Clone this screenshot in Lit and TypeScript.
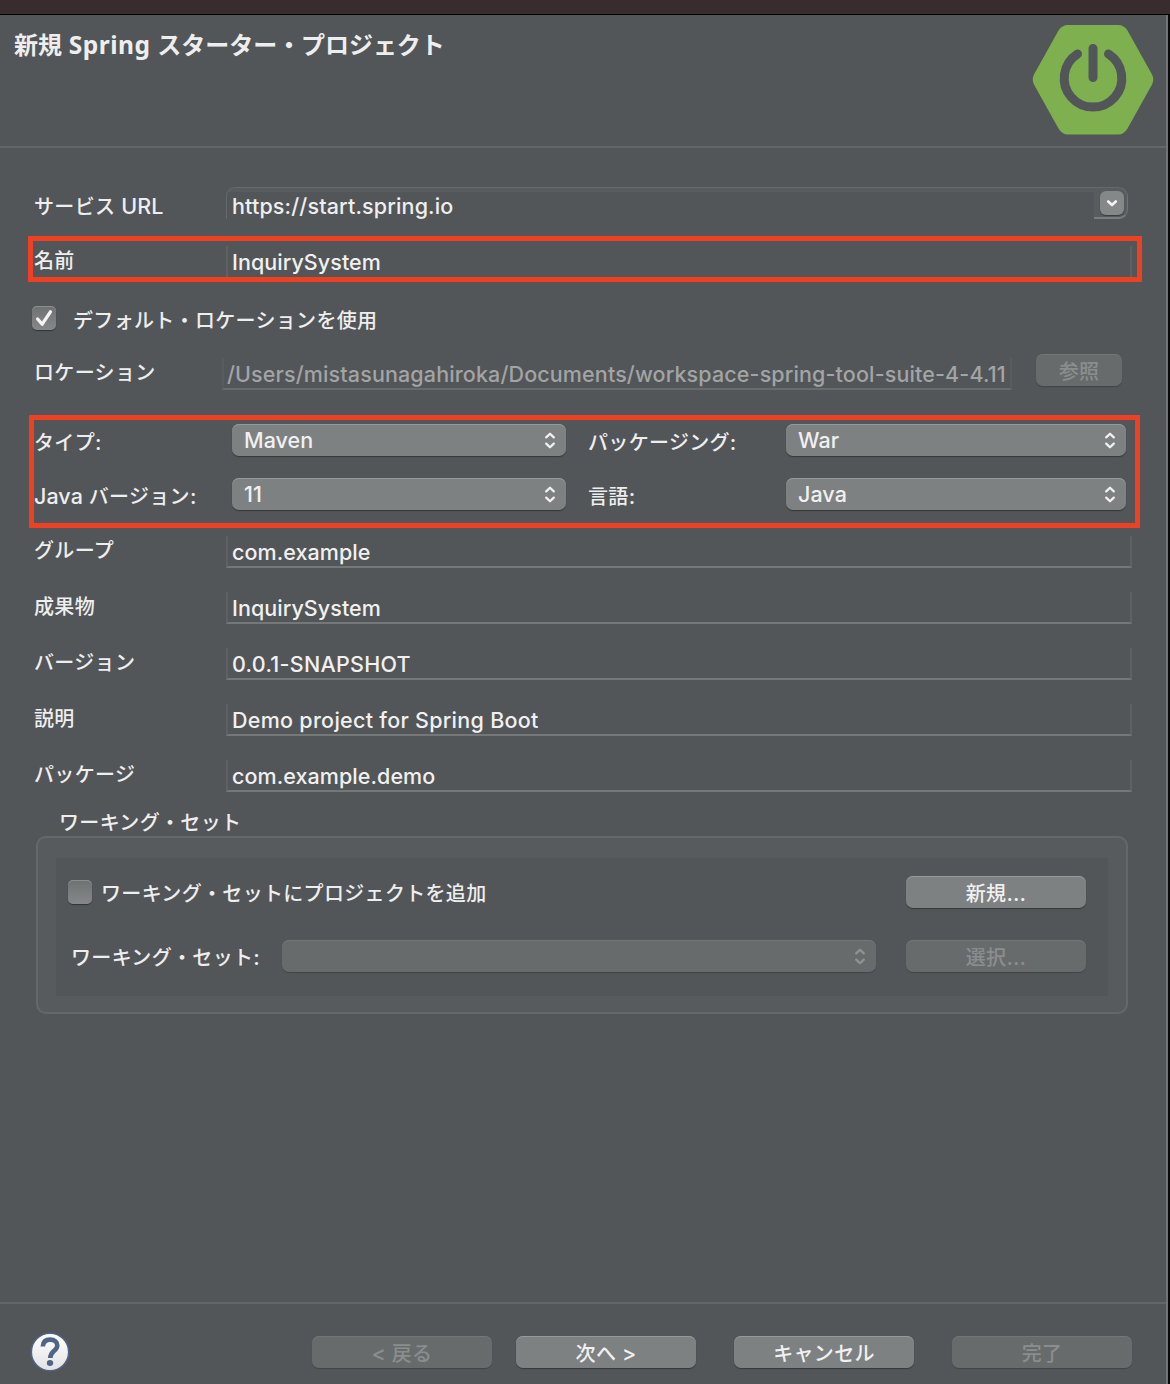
import { LitElement, html, css, svg } from "lit";
import { customElement, property } from "lit/decorators.js";
import { classMap } from "lit/directives/class-map.js";

/* Splits a caption into Latin and Japanese runs so that each gets its own face. */
const runs = (text: string) =>
  text
    .split(/([\u3000-\u30ff\u4e00-\u9fff]+)/)
    .filter((part) => part.length > 0)
    .map((part) =>
      /[\u3000-\u30ff\u4e00-\u9fff]/.test(part)
        ? html`<span class="ja">${part}</span>`
        : html`<span class="en">${part}</span>`
    );

const textStyles = css`
  :host {
    display: block;
    box-sizing: border-box;
  }
  .ja {
    font-family: "Noto Sans CJK JP", sans-serif;
    font-size: 20px;
    font-weight: 500;
    letter-spacing: 0.32px;
  }
  .en {
    font-family: Inter, "Liberation Sans", sans-serif;
    font-size: 21.5px;
    font-weight: 500;
    letter-spacing: var(--track, 0.06px);
    white-space: pre;
  }
`;

const arrows = svg`
  <path d="M2.200 5.400 L6 1.700 L9.800 5.400 M2.200 11.600 L6 15.300 L9.800 11.600"
    fill="none" stroke="currentColor" stroke-width="2.300"
    stroke-linecap="round" stroke-linejoin="round"></path>`;

@customElement("push-button")
export class PushButton extends LitElement {
  @property() label = "";
  @property({ type: Boolean }) disabled = false;

  static styles = [
    textStyles,
    css`
      .face {
        box-sizing: border-box;
        height: 32px;
        display: flex;
        justify-content: center;
        border-radius: 7px;
        color: #f0f0f0;
        background: #7e8182;
        box-shadow: inset 0 1px 0 #979a9b, 0 1px 1px rgba(0, 0, 0, 0.35);
        line-height: 33px;
        white-space: pre;
      }
      .disabled {
        color: #8b8e8f;
        background: #676b6c;
        box-shadow: inset 0 1px 0 #727677, 0 1px 1px rgba(0, 0, 0, 0.2);
      }
    `,
  ];

  render() {
    return html`<div class=${classMap({ face: true, disabled: this.disabled })}>
      <span>${runs(this.label)}</span>
    </div>`;
  }
}

@customElement("popup-button")
export class PopupButton extends LitElement {
  @property() value = "";
  @property({ type: Boolean }) disabled = false;

  static styles = [
    textStyles,
    css`
      .face {
        box-sizing: border-box;
        height: 32px;
        display: flex;
        justify-content: space-between;
        padding: 0 10px 0 12px;
        border-radius: 7px;
        color: #f0f0f0;
        background: #7e8182;
        box-shadow: inset 0 1px 0 #979a9b, 0 1px 1px rgba(0, 0, 0, 0.35);
        line-height: 33px;
      }
      .disabled {
        color: #8f9293;
        background: #676b6c;
        box-shadow: inset 0 1px 0 #727677, 0 1px 1px rgba(0, 0, 0, 0.2);
      }
      svg {
        display: block;
        width: 12px;
        height: 17px;
        margin-top: 8px;
      }
    `,
  ];

  render() {
    return html`<div class=${classMap({ face: true, disabled: this.disabled })}>
      <span>${runs(this.value)}</span>
      <svg viewBox="0 0 12 17">${arrows}</svg>
    </div>`;
  }
}

@customElement("text-field")
export class TextField extends LitElement {
  @property() value = "";
  @property({ type: Boolean }) disabled = false;

  static styles = [
    textStyles,
    css`
      .field {
        box-sizing: border-box;
        height: var(--field-height, 32px);
        padding-left: 4px;
        border: 2px solid #5e6263;
        border-width: 0 2px 2px;
        border-bottom-color: #747879;
        color: #f0f0f0;
        line-height: 32px;
        white-space: nowrap;
      }
      .disabled {
        padding-left: 3px;
        color: #a2a4a5;
        border-color: #585c5e;
        border-bottom-color: #686c6d;
      }
    `,
  ];

  render() {
    return html`<div class=${classMap({ field: true, disabled: this.disabled })}>${runs(this.value)}</div>`;
  }
}

@customElement("check-box")
export class CheckBox extends LitElement {
  @property({ type: Boolean }) checked = false;

  static styles = css`
    :host {
      display: block;
    }
    .box {
      width: 24px;
      height: 24px;
      border-radius: 5px;
      background: linear-gradient(#6f7273, #858788);
      box-shadow: inset 0 1px 0 #8b8e8f, 0 1px 1px rgba(0, 0, 0, 0.4);
    }
    svg {
      display: block;
      width: 24px;
      height: 24px;
    }
  `;

  render() {
    return html`<div class="box">
      ${this.checked
        ? html`<svg viewBox="0 0 24 24">
            <path d="M5.600 13 L10.200 18.200 L18.400 5.800" fill="none" stroke="#f4f4f4" stroke-width="3.300"
              stroke-linecap="round" stroke-linejoin="round"></path>
          </svg>`
        : null}
    </div>`;
  }
}

const fields = [
  { label: "グループ", value: "com.example", loose: false },
  { label: "成果物", value: "InquirySystem", loose: false },
  { label: "バージョン", value: "0.0.1-SNAPSHOT", loose: true },
  { label: "説明", value: "Demo project for Spring Boot", loose: true },
  { label: "パッケージ", value: "com.example.demo", loose: false },
];

const options = [
  [
    { label: "タイプ:", value: "Maven" },
    { label: "パッケージング:", value: "War" },
  ],
  [
    { label: "Java バージョン:", value: "11" },
    { label: "言語:", value: "Java" },
  ],
];

@customElement("app-root")
export class AppRoot extends LitElement {
  static styles = [
    textStyles,
    css`
      .screen {
        box-sizing: border-box;
        width: 1170px;
        height: 1384px;
        display: flex;
        flex-direction: column;
        overflow: hidden;
        background: #0a0a0b;
        color: #eeeeee;
      }
      .backdrop {
        height: 14px;
        background: #382c2e;
        border-bottom: 1px solid #000;
      }
      .dialog {
        box-sizing: border-box;
        width: 1168px;
        flex: 1;
        display: flex;
        flex-direction: column;
        background: #525658;
        border-right: 2px solid #707475;
      }
      header {
        box-sizing: border-box;
        height: 133px;
        display: flex;
        justify-content: space-between;
        padding: 9px 12px 0 14px;
        border-bottom: 2px solid #626667;
      }
      h1 {
        margin: 3px 0 0;
        font-size: 24px;
        line-height: 34px;
        font-weight: 700;
      }
      h1 .ja {
        font-size: 24px;
        font-weight: 700;
        letter-spacing: -0.05px;
      }
      h1 .en {
        font-family: "Noto Sans", sans-serif;
        font-size: 24.5px;
        font-weight: 700;
        letter-spacing: 0.5px;
      }
      .logo {
        width: 122px;
        height: 112px;
      }
      main {
        flex: 1;
        padding-top: 39px;
      }
      .row {
        position: relative;
        box-sizing: border-box;
        display: flex;
        align-items: flex-start;
        padding-left: 34px;
        height: 56px;
      }
      .url {
        --track: 0.15px;
        height: 59px;
      }
      .title {
        --field-height: 34px;
        height: 58px;
      }
      .default {
        height: 50px;
        padding: 2px 0 0 32px;
        gap: 17px;
      }
      .location {
        height: 70px;
      }
      .options {
        position: relative;
        height: 112px;
      }
      .options .row {
        height: 54px;
      }
      .label {
        width: 192px;
        line-height: 32px;
        margin-top: -2px;
        white-space: nowrap;
      }
      .url .label {
        margin-top: 3px;
      }
      .options .label,
      .location .label {
        margin-top: 2px;
      }
      .wide {
        width: 906px;
      }
      .loose {
        --track: 0.28px;
      }
      .path {
        --track: 0.13px;
        flex: none;
        width: 790px;
        margin: 4px 24px 0 -4px;
      }
      .browse {
        flex: none;
        width: 86px;
      }
      .options .label {
        width: 198px;
      }
      .options .second {
        margin-left: 22px;
      }
      .options .label + .menu {
        width: 334px;
      }
      .options .second + .menu {
        width: 340px;
      }
      .mark {
        position: absolute;
        box-sizing: border-box;
        border: 5px solid #ee4023;
      }
      .mark-name {
        left: 27.5px;
        top: -10.5px;
        width: 1114px;
        height: 46px;
      }
      .mark-options {
        left: 28.5px;
        top: -9.5px;
        width: 1111px;
        height: 113px;
      }
      .combo {
        box-sizing: border-box;
        width: 902px;
        height: 32px;
        display: flex;
        justify-content: space-between;
        border-top: 1px solid #66696a;
        border-left: 1px solid #66696a;
        border-radius: 9px 9px 9px 0;
        background: linear-gradient(#585c5e 4px, #525658 4px);
        padding-left: 5px;
        line-height: 37px;
      }
      .drop {
        box-sizing: border-box;
        width: 34px;
        height: 31px;
        padding: 3px 0 0 6px;
        border: 1px solid #6e7273;
        border-bottom: 2px solid #797d7e;
        border-width: 0 1px 2px 0;
        border-radius: 0 9px 9px 0;
        background: #585c5e;
      }
      .drop svg {
        display: block;
        width: 24px;
        height: 24px;
        border-radius: 6px;
        background: #858889;
        box-shadow: 0 1px 1px rgba(0, 0, 0, 0.35);
      }
      .caption {
        line-height: 28px;
      }
      .legend {
        height: 20px;
        padding-left: 59px;
        line-height: 12px;
      }
      .group {
        box-sizing: border-box;
        width: 1092px;
        height: 178px;
        margin-left: 36px;
        padding: 20px 18px 16px;
        border: 2px solid #64686a;
        border-radius: 10px;
        background: #575b5d;
      }
      .inner {
        box-sizing: border-box;
        height: 138px;
        padding: 18px 22px 0 12px;
        background: #525658;
        display: flex;
        flex-direction: column;
        gap: 32px;
      }
      .line {
        height: 32px;
        display: flex;
        align-items: center;
      }
      .line .caption {
        padding: 4px 0 0 9px;
        flex: 1;
      }
      .line .name {
        width: 211px;
        padding: 4px 0 0 3px;
        line-height: 32px;
      }
      .line .menu {
        width: 594px;
        margin-right: 30px;
      }
      .line .push {
        width: 180px;
      }
      footer {
        box-sizing: border-box;
        height: 82px;
        display: flex;
        align-items: flex-start;
        padding: 28px 34px 0 30px;
        border-top: 2px solid #626667;
      }
      .help {
        width: 40px;
        height: 40px;
        margin-right: auto;
      }
      footer .push {
        width: 180px;
        margin-top: 4px;
      }
      footer .next {
        margin: 4px 38px 0 24px;
      }
      footer .finish {
        margin-left: 38px;
      }
    `,
  ];

  render() {
    return html`<div class="screen">
      <div class="backdrop"></div>
      <div class="dialog">
        <header>
          <h1>${runs("新規 Spring スターター・プロジェクト")}</h1>
          <svg class="logo" viewBox="0 0 122 112">
            <path d="M36 1 H86 Q92 1 95.500 6.500 L120 50.500 Q122.500 55.500 120 60.500 L95.500 104.500 Q92 110.500 86 110.500 H36 Q30 110.500 26.500 104.500 L2 60.500 Q-0.500 55.500 2 50.500 L26.500 6.500 Q30 1 36 1 Z" fill="#7fb04f"></path>
            <path d="M45.500 30 A28.800 28.800 0 1 0 76.500 30 M61 24.500 V53.500" fill="none" stroke="#525658" stroke-width="9" stroke-linecap="round"></path>
          </svg>
        </header>
        <main>
          <div class="row url">
            <div class="label">${runs("サービス URL")}</div>
            <div class="combo">
              <span>${runs("https://start.spring.io")}</span>
              <div class="drop">
                <svg viewBox="0 0 24 24">
                  <path d="M8.200 10.500 L12 14 L15.800 10.500" fill="none" stroke="#f4f4f4" stroke-width="2.600" stroke-linecap="round" stroke-linejoin="round"></path>
                </svg>
              </div>
            </div>
          </div>
          <div class="row title">
            <div class="label">${runs("名前")}</div>
            <text-field class="wide" value="InquirySystem"></text-field>
            <div class="mark mark-name"></div>
          </div>
          <div class="row default">
            <check-box checked></check-box>
            <span class="caption">${runs("デフォルト・ロケーションを使用")}</span>
          </div>
          <div class="row location">
            <div class="label">${runs("ロケーション")}</div>
            <text-field class="path" disabled
              value="/Users/mistasunagahiroka/Documents/workspace-spring-tool-suite-4-4.11"></text-field>
            <push-button class="browse" label="参照" disabled></push-button>
          </div>
          <div class="options">
            ${options.map(
              (pair) => html`<div class="row">
                ${pair.map(
                  (o, i) => html`<div class=${classMap({ label: true, second: i === 1 })}>${runs(o.label)}</div>
                    <popup-button class="menu" value=${o.value}></popup-button>`
                )}
              </div>`
            )}
            <div class="mark mark-options"></div>
          </div>
          ${fields.map(
            (f) => html`<div class="row">
              <div class="label">${runs(f.label)}</div>
              <text-field class=${classMap({ wide: true, loose: f.loose })} value=${f.value}></text-field>
            </div>`
          )}
          <div class="legend">${runs("ワーキング・セット")}</div>
          <div class="group">
            <div class="inner">
              <div class="line">
                <check-box></check-box>
                <span class="caption">${runs("ワーキング・セットにプロジェクトを追加")}</span>
                <push-button class="push" label="新規..."></push-button>
              </div>
              <div class="line">
                <span class="name">${runs("ワーキング・セット:")}</span>
                <popup-button class="menu" disabled></popup-button>
                <push-button class="push" label="選択..." disabled></push-button>
              </div>
            </div>
          </div>
        </main>
        <footer>
          <svg class="help" viewBox="0 0 40 40">
            <defs>
              <linearGradient id="shine" x1="0" y1="0" x2="0" y2="1">
                <stop offset="0" stop-color="#ffffff"></stop>
                <stop offset="1" stop-color="#e2e2e2"></stop>
              </linearGradient>
            </defs>
            <circle cx="20" cy="20" r="18.700" fill="url(#shine)" stroke="#516488" stroke-width="1.600"></circle>
            <path d="M12.800 14.500 C13 9.500 16 7.600 20.200 7.600 C24.500 7.600 27.300 10 27.300 13.400 C27.300 19 20.300 18.800 20.300 26" fill="none" stroke="#516488" stroke-width="4.600"></path>
            <ellipse cx="20" cy="31" rx="3.200" ry="2.900" fill="#516488"></ellipse>
          </svg>
          <push-button class="push" label="&lt; 戻る" disabled></push-button>
          <push-button class="push next" label="次へ &gt;"></push-button>
          <push-button class="push" label="キャンセル"></push-button>
          <push-button class="push finish" label="完了" disabled></push-button>
        </footer>
      </div>
    </div>`;
  }
}
